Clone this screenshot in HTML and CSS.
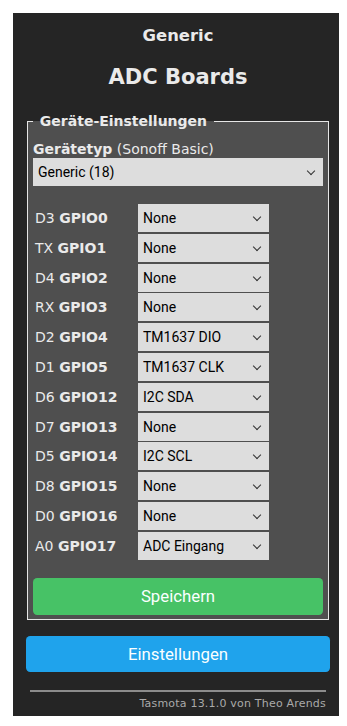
FILE: index.html
```
<!DOCTYPE html>
<html lang="de">
<head>
    <meta charset="UTF-8">
    <meta name="viewport" content="width=device-width, initial-scale=1.0">
    <title>Generic - Template</title>
    <link rel="stylesheet" href="styles.css">
</head>
<body>
    <div class="page">
        <h3>Generic</h3>
        <h2>ADC Boards</h2>

        <fieldset class="box">
            <legend>&nbsp;Geräte-Einstellungen&nbsp;</legend>
            <p class="type"><b>Gerätetyp</b> (Sonoff Basic)</p>
            <div class="pick wide">
                <select><option>Generic (18)</option></select>
            </div>

            <div class="pins">
                <div class="pin">
                    <span class="lbl">D3 <b>GPIO0</b></span>
                    <div class="pick"><select><option>None</option></select></div>
                </div>
                <div class="pin">
                    <span class="lbl">TX <b>GPIO1</b></span>
                    <div class="pick"><select><option>None</option></select></div>
                </div>
                <div class="pin">
                    <span class="lbl">D4 <b>GPIO2</b></span>
                    <div class="pick"><select><option>None</option></select></div>
                </div>
                <div class="pin">
                    <span class="lbl">RX <b>GPIO3</b></span>
                    <div class="pick"><select><option>None</option></select></div>
                </div>
                <div class="pin">
                    <span class="lbl">D2 <b>GPIO4</b></span>
                    <div class="pick"><select><option>TM1637 DIO</option></select></div>
                </div>
                <div class="pin">
                    <span class="lbl">D1 <b>GPIO5</b></span>
                    <div class="pick"><select><option>TM1637 CLK</option></select></div>
                </div>
                <div class="pin">
                    <span class="lbl">D6 <b>GPIO12</b></span>
                    <div class="pick"><select><option>I2C SDA</option></select></div>
                </div>
                <div class="pin">
                    <span class="lbl">D7 <b>GPIO13</b></span>
                    <div class="pick"><select><option>None</option></select></div>
                </div>
                <div class="pin">
                    <span class="lbl">D5 <b>GPIO14</b></span>
                    <div class="pick"><select><option>I2C SCL</option></select></div>
                </div>
                <div class="pin">
                    <span class="lbl">D8 <b>GPIO15</b></span>
                    <div class="pick"><select><option>None</option></select></div>
                </div>
                <div class="pin">
                    <span class="lbl">D0 <b>GPIO16</b></span>
                    <div class="pick"><select><option>None</option></select></div>
                </div>
                <div class="pin">
                    <span class="lbl">A0 <b>GPIO17</b></span>
                    <div class="pick"><select><option>ADC Eingang</option></select></div>
                </div>
            </div>

            <button class="btn save">Speichern</button>
        </fieldset>

        <button class="btn">Einstellungen</button>

        <div class="foot">
            <hr>
            <span>Tasmota 13.1.0 von Theo Arends</span>
        </div>
    </div>
</body>
</html>
```

FILE: styles.css
```
* {
    box-sizing: border-box;
}
body {
    margin: 13px 0 0 13px;
    background-color: #ffffff;
}
.page {
    width: 326px;
    padding: 0 9px 6px 13px;
    background-color: #252525;
    color: #eaeaea;
    font-family: 'DejaVu Sans', Verdana, sans-serif;
    font-size: 14px;
    overflow: hidden;
}
h3 {
    margin: 13px 0 0;
    font-size: 16.4px;
    line-height: 19px;
    text-align: center;
}
h2 {
    margin: 19.5px 0 0;
    font-size: 21px;
    line-height: 24px;
    text-align: center;
}
.box {
    margin: 24.5px 1px 0;
    padding: 0 5px 4px;
    min-width: 0;
    background-color: #4f4f4f;
    border: 1px solid #e6e6e6;
}
.box legend {
    padding: 0 2px;
    font-weight: bold;
    line-height: 16px;
}
.type {
    margin: 12px 0 0;
    line-height: 16px;
}
.pick {
    position: relative;
    height: 28px;
}
.pick.wide {
    margin-top: 1px;
}
.pick select {
    appearance: none;
    -webkit-appearance: none;
    display: block;
    width: 100%;
    height: 28px;
    margin: 0;
    padding: 0 20px 0 5px;
    border: 0;
    border-radius: 0;
    background-color: #dddddd;
    color: #000000;
    font-family: Roboto, 'Liberation Sans', sans-serif;
    font-size: 14px;
}
/* chevron of the select */
.pick::after {
    content: '';
    position: absolute;
    right: 9px;
    top: 10px;
    width: 5px;
    height: 5px;
    border-right: 1.5px solid #333333;
    border-bottom: 1.5px solid #333333;
    transform: rotate(45deg);
    pointer-events: none;
}
.pins {
    display: grid;
    row-gap: 1.8px;
    margin-top: 18px;
}
.pin {
    display: flex;
    align-items: center;
}
.pin .lbl {
    width: 105px;
    padding-left: 2px;
    line-height: 16px;
}
.pin .pick {
    width: 131px;
}
.btn {
    display: block;
    width: 100%;
    height: 36px;
    margin: 16px 0 0;
    padding: 0;
    border: 0;
    border-radius: 4.2px;
    background-color: #1fa3ec;
    color: #faffff;
    font-family: Roboto, 'Liberation Sans', sans-serif;
    font-size: 16.8px;
    cursor: pointer;
}
.btn.save {
    height: 37px;
    margin-top: 18px;
    background-color: #47c266;
}
.foot {
    text-align: right;
    font-size: 11px;
    line-height: 13px;
    letter-spacing: 0.2px;
    color: #aaaaaa;
    padding: 0 4px;
}
.foot hr {
    margin: 18px 0 5px;
    height: 0;
    border: 0;
    border-top: 2px solid #8c8c8c;
}
```
